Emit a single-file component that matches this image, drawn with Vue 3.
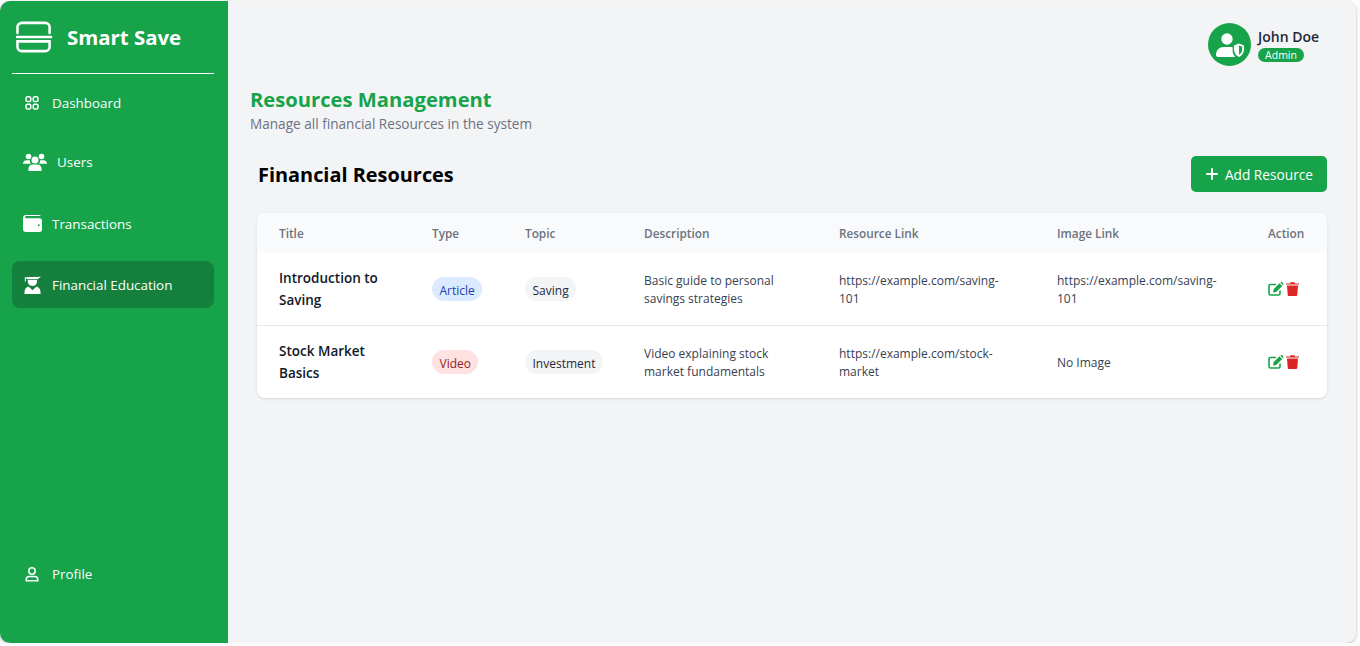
<script setup>
const nav = [
  { label: 'Dashboard', icon: 'grid' },
  { label: 'Users', icon: 'users' },
  { label: 'Transactions', icon: 'wallet' },
  { label: 'Financial Education', icon: 'grad', active: true }
]

const resources = [
  {
    title: 'Introduction to Saving',
    type: 'Article',
    topic: 'Saving',
    description: 'Basic guide to personal savings strategies',
    link: 'https://example.com/saving-101',
    image: 'https://example.com/saving-101'
  },
  {
    title: 'Stock Market Basics',
    type: 'Video',
    topic: 'Investment',
    description: 'Video explaining stock market fundamentals',
    link: 'https://example.com/stock-market',
    image: 'No Image'
  }
]
</script>

<template>
  <div class="shell">
    <aside class="sidebar">
      <div class="brand">
        <svg class="logo" viewBox="0 0 38 32" fill="none" stroke="#fff" stroke-width="2.6" stroke-linecap="round">
          <path d="M1.500 12V6a4.500 4.500 0 0 1 4.500-4.500h24A4.500 4.500 0 0 1 34.500 6v6" />
          <path d="M1 16h35" />
          <path d="M1.500 20.500h33V26a4.500 4.500 0 0 1-4.500 4.500H6A4.500 4.500 0 0 1 1.500 26z" />
        </svg>
        <span class="brand-name">Smart Save</span>
      </div>

      <nav class="nav">
        <a v-for="item in nav" :key="item.label" class="nav-item" :class="[item.icon, { active: item.active }]">
          <svg v-if="item.icon === 'grid'" class="nav-icon" viewBox="0 0 16 16" fill="none" stroke="#fff" stroke-width="1.500">
            <rect x="2" y="1.800" width="4.800" height="4.800" rx="1.600" />
            <rect x="9.200" y="1.800" width="4.800" height="4.800" rx="1.600" />
            <rect x="2" y="9.200" width="4.800" height="4.800" rx="1.600" />
            <rect x="9.200" y="9.200" width="4.800" height="4.800" rx="1.600" />
          </svg>
          <svg v-else-if="item.icon === 'users'" class="nav-icon" viewBox="0 0 24 18" fill="#fff">
            <circle cx="5.500" cy="3.500" r="2.800" />
            <circle cx="18.500" cy="3.500" r="2.800" />
            <circle cx="12" cy="7" r="3.500" />
            <path d="M0 10.500c0-2 1.500-3.300 3.500-3.300h2.400c.4 0 .8.100 1.100.2-.3 1.200.1 2.400 1 3.300H0zM24 10.500c0-2-1.500-3.300-3.500-3.300h-2.400c-.4 0-.8.100-1.100.2.300 1.200-.1 2.400-1 3.300H24z" />
            <path d="M5.500 18v-2.500c0-2.200 1.800-4 4-4h5c2.200 0 4 1.800 4 4V18z" />
          </svg>
          <svg v-else-if="item.icon === 'wallet'" class="nav-icon" viewBox="0 0 19 17" fill="#fff">
            <path fill-rule="evenodd" d="M3 0h13a2 2 0 0 1 1.800 1.100H3.200a1 1 0 0 0 0 2.200H16.500A2.500 2.500 0 0 1 19 5.800V14.500a2.500 2.500 0 0 1-2.500 2.500H3a3 3 0 0 1-3-3V3a3 3 0 0 1 3-3zm12.800 9.200a1 1 0 1 0 0 2 1 1 0 0 0 0-2z" />
          </svg>
          <svg v-else class="nav-icon" viewBox="0 0 18 18" fill="#fff">
            <path d="M1 1.200 17.500 .8 14 3.200H4z" />
            <rect x="1.300" y="1.500" width="1" height="4" />
            <path d="M4.300 4h9.200C13.900 7.200 12.400 10 9 10S3.900 7.200 4.300 4z" />
            <path d="M1 18v-1.800c0-2.800 1.500-4.800 4-5.600L9 14.200l4-3.600c2.500.8 4 2.800 4 5.600V18z" />
          </svg>
          <span>{{ item.label }}</span>
        </a>
      </nav>

      <a class="nav-item profile">
        <svg class="nav-icon" viewBox="0 0 16 16" fill="none" stroke="#fff" stroke-width="1.500">
          <circle cx="8" cy="5" r="3.200" />
          <path d="M2.200 14.800v-1.300c0-1.800 1.400-3 3.200-3h5.200c1.800 0 3.200 1.200 3.200 3v1.300z" />
        </svg>
        <span>Profile</span>
      </a>
    </aside>

    <main class="main">
      <header class="topbar">
        <div class="avatar">
          <svg viewBox="0 0 28 24" width="28" height="24" fill="#fff">
            <circle cx="11" cy="6" r="5.700" />
            <path d="M0 22c0-5 3.300-8 7.500-8h7c.8 0 1.500.1 2.200.3v4c0 2 .9 4 2.500 5.700H2c-1.200 0-2-.8-2-2z" />
            <path fill-rule="evenodd" d="M23 10.500l5 2v3.700c0 3.500-2.100 6.300-5 7.800-2.900-1.500-5-4.300-5-7.800v-3.700zm0 2v9.200c1.900-1.200 3.200-3.200 3.200-5.500v-2.500z" />
          </svg>
        </div>
        <div class="user">
          <div class="user-name">John Doe</div>
          <span class="user-role">Admin</span>
        </div>
      </header>

      <div class="page-head">
        <h1>Resources Management</h1>
        <p>Manage all financial Resources in the system</p>
      </div>

      <section class="content">
        <div class="content-head">
          <h2>Financial Resources</h2>
          <button class="add-btn">
            <svg viewBox="0 0 12 12" width="12" height="12" stroke="#fff" stroke-width="2" stroke-linecap="round">
              <path d="M6 1v10M1 6h10" />
            </svg>
            Add Resource
          </button>
        </div>

        <div class="table-card">
          <table>
            <colgroup>
              <col class="c-title" />
              <col class="c-type" />
              <col class="c-topic" />
              <col class="c-desc" />
              <col class="c-link" />
              <col class="c-image" />
              <col class="c-action" />
            </colgroup>
            <thead>
              <tr>
                <th>Title</th>
                <th>Type</th>
                <th>Topic</th>
                <th>Description</th>
                <th>Resource Link</th>
                <th>Image Link</th>
                <th>Action</th>
              </tr>
            </thead>
            <tbody>
              <tr v-for="r in resources" :key="r.title">
                <td class="title">{{ r.title }}</td>
                <td><span class="pill" :class="r.type.toLowerCase()">{{ r.type }}</span></td>
                <td><span class="pill topic">{{ r.topic }}</span></td>
                <td class="text">{{ r.description }}</td>
                <td class="text">{{ r.link }}</td>
                <td class="text">{{ r.image }}</td>
                <td>
                  <div class="actions">
                    <svg viewBox="0 0 16 14" width="16" height="14">
                      <path fill="none" stroke="#16a34a" stroke-width="1.600" stroke-linejoin="round" d="M12 8.500V11.500a1.500 1.500 0 0 1-1.500 1.500H2.500A1.500 1.500 0 0 1 1 11.500V4a1.500 1.500 0 0 1 1.500-1.500H8" />
                      <path fill="#16a34a" d="M5.500 7.300 11.500 1.300l2.700 2.700-6 6-3 .4zM12.300.6l.6-.4c.4-.3.900-.2 1.200.1l1.200 1.200c.3.300.3.800 0 1.200l-.4.500z" />
                    </svg>
                    <svg viewBox="0 0 13 14" width="13" height="14" fill="#dc2626">
                      <path d="M0 1.400h4L4.500.3h4L9 1.400h4v1.200H0z" />
                      <path d="M1 3.400h11l-.7 9.400a1.200 1.200 0 0 1-1.200 1.200H2.900a1.200 1.200 0 0 1-1.200-1.200z" />
                    </svg>
                  </div>
                </td>
              </tr>
            </tbody>
          </table>
        </div>
      </section>
    </main>
  </div>
</template>

<style>
html, body {
  background: #fbfbfb;
}
</style>

<style scoped>
.shell {
  display: flex;
  height: 642px;
  margin-right: 4px;
  margin-top: 1px;
  border-radius: 10px;
  overflow: hidden;
  background: #f3f4f6;
  box-shadow: 0 1px 3px rgba(0, 0, 0, 0.25);
  font-family: "Open Sans", "Noto Sans", sans-serif;
  color: #374151;
}

.sidebar {
  width: 228px;
  flex: none;
  display: flex;
  flex-direction: column;
  background: #16a34a;
  padding: 0 14px 0 12px;
  box-sizing: border-box;
  color: #fff;
}

.brand {
  display: flex;
  align-items: center;
  gap: 14px;
  height: 72px;
  margin-bottom: 1px;
  padding-left: 4px;
  border-bottom: 1px solid #fff;
}

.logo {
  width: 37px;
  height: 32px;
  flex: none;
  margin-top: -1px;
}

.brand-name {
  font-size: 20.400px;
  font-weight: 700;
}

.nav {
  display: flex;
  flex-direction: column;
}

.nav-item {
  display: flex;
  align-items: center;
  gap: 12px;
  height: 47px;
  padding: 0 12px;
  font-size: 13.400px;
  border-radius: 8px;
  color: #fff;
}

.nav-icon {
  width: 16px;
  height: 16px;
  flex: none;
}

.nav-item.grid {
  margin-top: 4px;
}

.nav-item.users {
  margin-top: 12px;
  padding-left: 11px;
  gap: 10px;
}

.nav-item.users .nav-icon {
  width: 24px;
  height: 18px;
}

.nav-item.wallet {
  margin-top: 15px;
  padding-left: 11px;
  gap: 10px;
}

.nav-item.wallet .nav-icon {
  width: 19px;
  height: 17px;
}

.nav-item.grad {
  margin-top: 14px;
  padding-left: 11px;
  gap: 10px;
}

.nav-item.grad .nav-icon {
  width: 19px;
  height: 18px;
}

.nav-item.active {
  background: #15803d;
}

.profile {
  margin-top: auto;
  margin-bottom: 46px;
}

.main {
  flex: 1;
  min-width: 0;
  padding: 22px 29px 0 22px;
}

.topbar {
  display: flex;
  justify-content: flex-end;
  align-items: center;
  gap: 7px;
  height: 43px;
}

.avatar {
  width: 43px;
  height: 43px;
  border-radius: 50%;
  background: #16a34a;
  display: flex;
  align-items: center;
  justify-content: center;
}

.user {
  width: 69px;
}

.user-name {
  font-size: 14px;
  font-weight: 600;
  line-height: 19px;
  color: #1f2937;
}

.user-role {
  display: block;
  width: 46px;
  height: 14px;
  margin-top: 2px;
  border-radius: 7px;
  background: #16a34a;
  color: #fff;
  font-size: 10.500px;
  line-height: 14px;
  text-align: center;
}

.page-head {
  margin-top: 20px;
}

h1 {
  margin: 0 0 2px;
  font-size: 20.200px;
  font-weight: 700;
  line-height: 27px;
  color: #16a34a;
}

.page-head p {
  margin: 0;
  font-size: 13.600px;
  line-height: 18px;
  color: #6b7280;
}

.content {
  margin-top: 23px;
  padding-left: 7px;
}

.content-head {
  display: flex;
  justify-content: space-between;
  align-items: center;
  height: 36px;
  margin-bottom: 21px;
}

h2 {
  margin: 0 0 0 1px;
  font-size: 19.900px;
  font-weight: 700;
  color: #000;
}

.add-btn {
  display: flex;
  align-items: center;
  gap: 7px;
  height: 36px;
  padding: 0 14px 0 15px;
  border: 0;
  border-radius: 5px;
  background: #16a34a;
  color: #fff;
  font-family: inherit;
  font-size: 13.700px;
}

.table-card {
  background: #fff;
  border-radius: 8px;
  overflow: hidden;
  box-shadow: 0 1px 3px rgba(0, 0, 0, 0.12);
}

table {
  width: 100%;
  table-layout: fixed;
  border-collapse: collapse;
  font-size: 12px;
}

.c-title { width: 153px; }
.c-type { width: 93px; }
.c-topic { width: 119px; }
.c-desc { width: 195px; }
.c-link { width: 218px; }
.c-image { width: 211px; }
.c-action { width: 81px; }

th {
  height: 40px;
  padding: 0 0 0 22px;
  background: #f9fafb;
  text-align: left;
  font-size: 11.800px;
  font-weight: 600;
  color: #6b7280;
}

td {
  height: 72px;
  padding: 0 22px;
  line-height: 18px;
  color: #374151;
  vertical-align: middle;
}

td.text {
  height: 70px;
  padding-top: 2px;
}

tbody tr + tr td {
  border-top: 1px solid #e5e7eb;
}

td.title {
  padding-right: 20px;
  font-size: 13.500px;
  font-weight: 600;
  line-height: 22px;
  color: #111827;
}

.pill {
  display: inline-block;
  padding: 0 7.500px;
  height: 24px;
  line-height: 27px;
  border-radius: 12px;
}

.article {
  background: #dbeafe;
  color: #1e40af;
}

.video {
  background: #fee2e2;
  color: #991b1b;
}

.topic {
  background: #f3f4f6;
  color: #1f2937;
}

.actions {
  display: flex;
  align-items: center;
  gap: 2px;
}
</style>
